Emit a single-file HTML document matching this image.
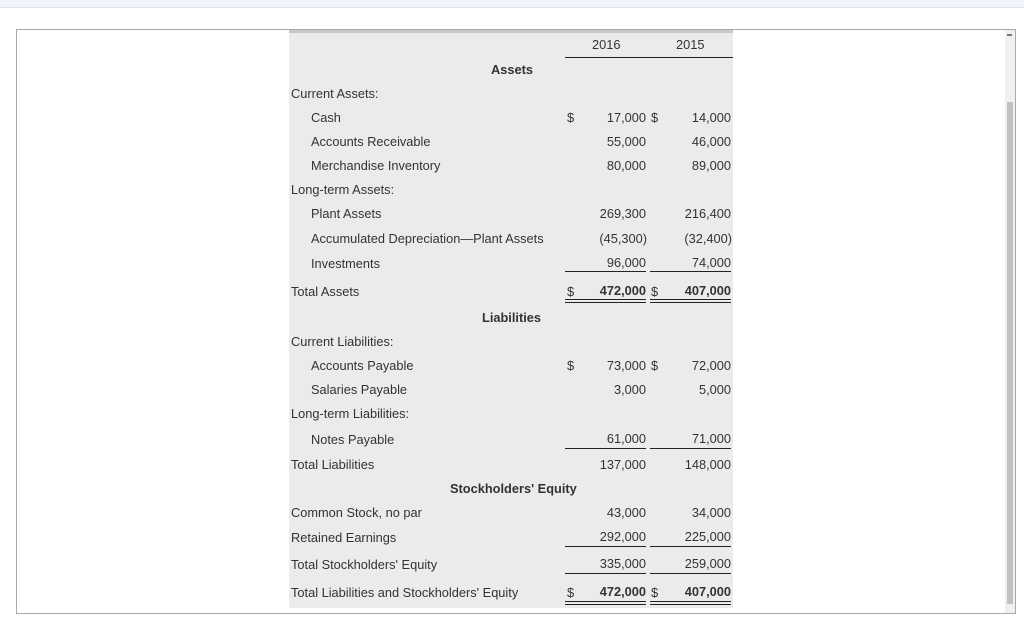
<!DOCTYPE html>
<html><head><meta charset="utf-8"><style>
body{margin:0;width:1024px;height:620px;background:#fff;position:relative;overflow:hidden;font-family:"Liberation Sans",Arial,sans-serif;font-size:12.8px;color:#333}
.a{position:absolute;white-space:nowrap;line-height:14px;transform:translateY(1px)}
.r{text-align:right}
.b{font-weight:bold}
.ln{position:absolute;height:0;border-top:1px solid #222}
.dl{position:absolute;height:2px;border-top:1px solid #222;border-bottom:1px solid #222}
</style></head><body>
<div style="position:absolute;left:0;top:0;width:1024px;height:7px;background:#f2f6fb;border-bottom:1px solid #dde5ee"></div>
<div style="position:absolute;left:16px;top:29px;width:998px;height:583px;border:1px solid #a9a9a9"></div>
<div style="position:absolute;left:1005px;top:30px;width:10px;height:583px;background:#f0f0f0"></div>
<div style="position:absolute;left:1007px;top:102px;width:6px;height:502px;background:#c1c1c1"></div>
<div style="position:absolute;left:1007px;top:34px;width:5px;height:2px;background:#777"></div>
<div style="position:absolute;left:289px;top:30px;width:444px;height:578px;background:#ebebeb"></div>
<div style="position:absolute;left:289px;top:30px;width:444px;height:3px;background:#c8c8c8"></div>

<div class="a" style="left:592px;top:37px">2016</div>
<div class="a" style="left:676px;top:37px">2015</div>
<div class="ln" style="left:565px;top:57px;width:168px"></div>

<div class="a b" style="left:491px;top:62px">Assets</div>
<div class="a" style="left:291px;top:86px">Current Assets:</div>
<div class="a" style="left:311px;top:110px">Cash</div>
<div class="a" style="left:311px;top:134px">Accounts Receivable</div>
<div class="a" style="left:311px;top:158px">Merchandise Inventory</div>
<div class="a" style="left:291px;top:182px">Long-term Assets:</div>
<div class="a" style="left:311px;top:206px">Plant Assets</div>
<div class="a" style="left:311px;top:231px">Accumulated Depreciation—Plant Assets</div>
<div class="a" style="left:311px;top:256px">Investments</div>
<div class="a" style="left:291px;top:284px">Total Assets</div>
<div class="a b" style="left:482px;top:310px">Liabilities</div>
<div class="a" style="left:291px;top:334px">Current Liabilities:</div>
<div class="a" style="left:311px;top:358px">Accounts Payable</div>
<div class="a" style="left:311px;top:382px">Salaries Payable</div>
<div class="a" style="left:291px;top:406px">Long-term Liabilities:</div>
<div class="a" style="left:311px;top:432px">Notes Payable</div>
<div class="a" style="left:291px;top:457px">Total Liabilities</div>
<div class="a b" style="left:450px;top:481px">Stockholders' Equity</div>
<div class="a" style="left:291px;top:505px">Common Stock, no par</div>
<div class="a" style="left:291px;top:530px">Retained Earnings</div>
<div class="a" style="left:291px;top:557px">Total Stockholders' Equity</div>
<div class="a" style="left:291px;top:585px">Total Liabilities and Stockholders' Equity</div>

<div class="a" style="left:567px;top:110px">$</div>
<div class="a" style="left:651px;top:110px">$</div>
<div class="a" style="left:567px;top:284px">$</div>
<div class="a" style="left:651px;top:284px">$</div>
<div class="a" style="left:567px;top:358px">$</div>
<div class="a" style="left:651px;top:358px">$</div>
<div class="a" style="left:567px;top:585px">$</div>
<div class="a" style="left:651px;top:585px">$</div>

<div class="a r" style="right:378px;top:110px">17,000</div><div class="a r" style="right:293px;top:110px">14,000</div>
<div class="a r" style="right:378px;top:134px">55,000</div><div class="a r" style="right:293px;top:134px">46,000</div>
<div class="a r" style="right:378px;top:158px">80,000</div><div class="a r" style="right:293px;top:158px">89,000</div>
<div class="a r" style="right:378px;top:206px">269,300</div><div class="a r" style="right:293px;top:206px">216,400</div>
<div class="a r" style="right:377px;top:231px">(45,300)</div><div class="a r" style="right:292px;top:231px">(32,400)</div>
<div class="a r" style="right:378px;top:255px">96,000</div><div class="a r" style="right:293px;top:255px">74,000</div>
<div class="ln" style="left:565px;top:271px;width:81px"></div><div class="ln" style="left:650px;top:271px;width:81px"></div>
<div class="a r b" style="right:378px;top:283px">472,000</div><div class="a r b" style="right:293px;top:283px">407,000</div>
<div class="dl" style="left:565px;top:299px;width:81px"></div><div class="dl" style="left:650px;top:299px;width:81px"></div>
<div class="a r" style="right:378px;top:358px">73,000</div><div class="a r" style="right:293px;top:358px">72,000</div>
<div class="a r" style="right:378px;top:382px">3,000</div><div class="a r" style="right:293px;top:382px">5,000</div>
<div class="a r" style="right:378px;top:431px">61,000</div><div class="a r" style="right:293px;top:431px">71,000</div>
<div class="ln" style="left:565px;top:448px;width:81px"></div><div class="ln" style="left:650px;top:448px;width:81px"></div>
<div class="a r" style="right:378px;top:457px">137,000</div><div class="a r" style="right:293px;top:457px">148,000</div>
<div class="a r" style="right:378px;top:505px">43,000</div><div class="a r" style="right:293px;top:505px">34,000</div>
<div class="a r" style="right:378px;top:529px">292,000</div><div class="a r" style="right:293px;top:529px">225,000</div>
<div class="ln" style="left:565px;top:546px;width:81px"></div><div class="ln" style="left:650px;top:546px;width:81px"></div>
<div class="a r" style="right:378px;top:556px">335,000</div><div class="a r" style="right:293px;top:556px">259,000</div>
<div class="ln" style="left:565px;top:573px;width:81px"></div><div class="ln" style="left:650px;top:573px;width:81px"></div>
<div class="a r b" style="right:378px;top:584px">472,000</div><div class="a r b" style="right:293px;top:584px">407,000</div>
<div class="dl" style="left:565px;top:601px;width:81px"></div><div class="dl" style="left:650px;top:601px;width:81px"></div>
</body></html>
